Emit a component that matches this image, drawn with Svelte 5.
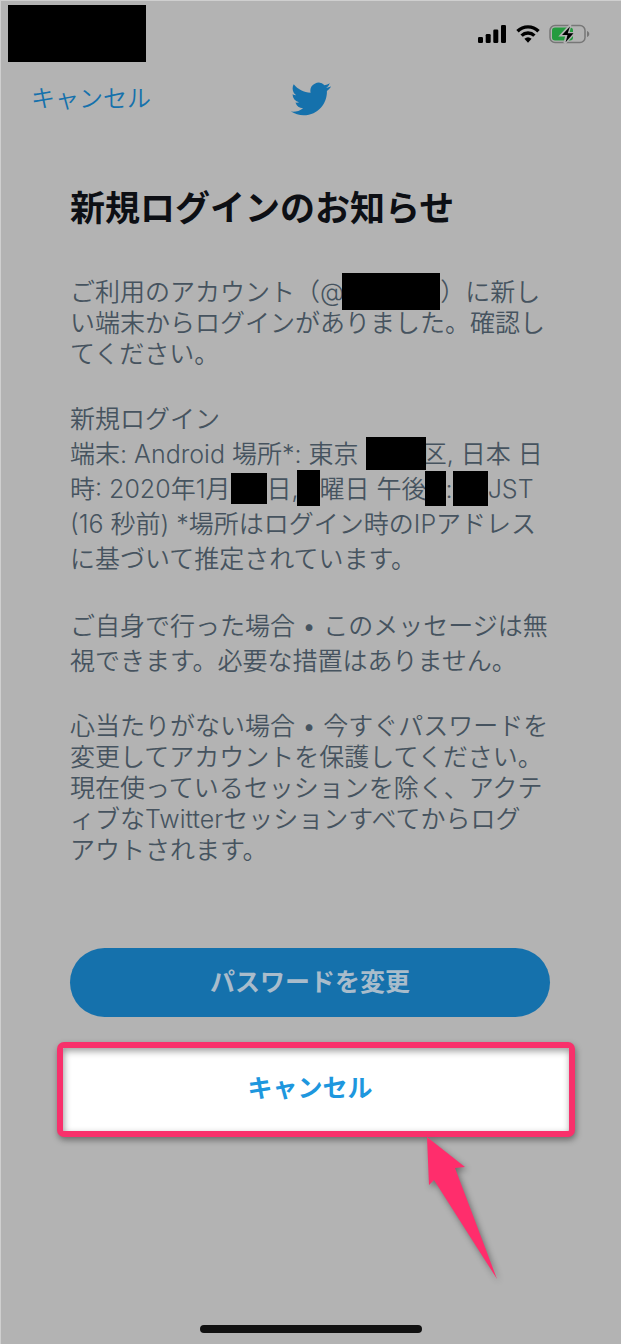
<script lang="ts">
	type Part = string | { w: number; h: number; clip?: 'before' | 'after' };

	const paragraphs: { id: string; tight: boolean; lines: Part[][] }[] = [
		{
			id: 'intro',
			tight: true,
			lines: [
				['ご利用のアカウント（@', { w: 98, h: 37, clip: 'before' }, '）に新し'],
				['い端末からログインがありました。確認し'],
				['てください。']
			]
		},
		{
			id: 'details',
			tight: false,
			lines: [
				['新規ログイン'],
				['端末: Android 場所*: 東京 ', { w: 60, h: 33, clip: 'after' }, '区, 日本 日'],
				[
					'時: 2020年1月',
					{ w: 36, h: 31 },
					'日,',
					{ w: 23, h: 36, clip: 'before' },
					'曜日 午後',
					{ w: 21, h: 35, clip: 'before' },
					':',
					{ w: 35, h: 35 },
					'JST'
				],
				['(16 秒前) *場所はログイン時のIPアドレス'],
				['に基づいて推定されています。']
			]
		},
		{
			id: 'own',
			tight: false,
			lines: [
				['ご自身で行った場合 • このメッセージは無'],
				['視できます。必要な措置はありません。']
			]
		},
		{
			id: 'unknown',
			tight: true,
			lines: [
				['心当たりがない場合 • 今すぐパスワードを'],
				['変更してアカウントを保護してください。'],
				['現在使っているセッションを除く、アクテ'],
				['ィブなTwitterセッションすべてからログ'],
				['アウトされます。']
			]
		}
	];
</script>

<main class="screen">
	<div class="status">
		<span class="mask"></span>
		<div class="status-icons">
			<svg width="29" height="20" viewBox="0 0 29 20">
				<rect x="0" y="13" width="5" height="6" rx="1.3" />
				<rect x="7.7" y="10" width="5" height="9" rx="1.3" />
				<rect x="15.3" y="5.5" width="5" height="13.5" rx="1.3" />
				<rect x="23" y="1" width="5" height="18" rx="1.3" />
			</svg>
			<svg width="24" height="20" viewBox="0 0 24 20">
				<g fill="none" stroke="#000" stroke-width="3.4">
					<path d="M1.5 7.2a15 15 0 0 1 21 0" />
					<path d="M5.6 11.6a9.2 9.2 0 0 1 12.8 0" />
				</g>
				<path d="M8.4 14.8a5.4 5.4 0 0 1 7.2 0L12 18.8z" />
			</svg>
			<svg width="42" height="20" viewBox="0 0 42 20">
				<rect x="1" y="1.5" width="35" height="17" rx="5" fill="none" stroke="#777" stroke-width="1.5" />
				<path d="M38 7c3 .8 3 5.2 0 6z" fill="#777" />
				<rect x="3" y="3.5" width="21" height="13" rx="3" fill="#239b3e" />
				<path d="M21 1.5 12 11.3h5.6l-2 8L25 9.2h-5.8z" stroke="#b3b3b3" stroke-width="2.4" />
				<path d="M21 2.5 13 11h5.6l-2 7.2L24.5 9.2h-5.8z" />
			</svg>
		</div>
	</div>

	<header class="topbar">
		<button class="back">キャンセル</button>
		<svg class="logo" width="40" height="34" viewBox="0 2 24 20" role="img" aria-label="Twitter">
			<path
				d="M23.953 4.57a10 10 0 0 1-2.825.775 4.958 4.958 0 0 0 2.163-2.723 9.99 9.99 0 0 1-3.127 1.184 4.92 4.92 0 0 0-8.384 4.482C7.69 8.095 4.067 6.13 1.64 3.162a4.822 4.822 0 0 0-.666 2.475c0 1.71.87 3.213 2.188 4.096a4.904 4.904 0 0 1-2.228-.616v.06a4.923 4.923 0 0 0 3.946 4.827 4.996 4.996 0 0 1-2.212.085 4.936 4.936 0 0 0 4.604 3.417 9.867 9.867 0 0 1-6.102 2.105c-.39 0-.779-.023-1.17-.067a13.995 13.995 0 0 0 7.557 2.209c9.053 0 13.998-7.496 13.998-13.985 0-.21 0-.42-.015-.63a9.935 9.935 0 0 0 2.46-2.548z"
			/>
		</svg>
	</header>

	<section class="content">
		<h1>新規ログインのお知らせ</h1>

		{#each paragraphs as p (p.id)}
			<p class:tight={p.tight}>
				{#each p.lines as line}
					<span class="line"
						>{#each line as part}{#if typeof part === 'string'}{part}{:else}<span
									class="redacted"
									class:clip-before={part.clip === 'before'}
									class:clip-after={part.clip === 'after'}
									style="width: {part.w}px; height: {part.h}px"
								></span>{/if}{/each}</span
					>
				{/each}
			</p>
		{/each}

		<button class="primary">パスワードを変更</button>

		<div class="highlight">
			<button class="secondary">キャンセル</button>
			<svg class="arrow" width="90" height="160" viewBox="0 0 90 160">
				<path d="M7 5 45 35 35 36 77 147 14 48 9 53z" />
			</svg>
		</div>
	</section>

	<div class="home"></div>
</main>

<style>
	:global(body) {
		margin: 0;
		background: #b3b3b3;
	}

	.screen {
		box-sizing: border-box;
		display: flex;
		flex-direction: column;
		min-height: 100vh;
		border-top: 1px solid #cfcfcf;
		border-left: 1px solid #cfcfcf;
		background: #b3b3b3;
		color: #46535f;
		font-family: Inter, 'Noto Sans CJK JP', sans-serif;
		overflow: hidden;
	}

	button {
		padding: 0;
		border: none;
		background: none;
		font-family: inherit;
		cursor: pointer;
	}

	.status {
		display: flex;
		justify-content: space-between;
		padding: 4px 30px 0 7px;
	}

	.mask {
		width: 138px;
		height: 57px;
		background: #000;
	}

	.status-icons {
		display: flex;
		gap: 9px;
		padding-top: 19px;
	}

	.topbar {
		display: grid;
		grid-template-columns: 1fr auto 1fr;
		align-items: center;
		height: 74px;
		padding: 0 30px;
	}

	.back {
		justify-self: start;
		color: #1571ac;
		font-size: 24px;
		line-height: 36px;
		font-weight: 350;
	}

	.logo {
		fill: #1571ac;
	}

	.content {
		display: flex;
		flex-direction: column;
		padding: 0 71px 0 69px;
	}

	h1 {
		margin: 46px 0 43px;
		color: #0d0f14;
		font-size: 35px;
		line-height: 52px;
		font-weight: 700;
		white-space: nowrap;
	}

	p {
		margin: 0 0 32px;
		font-size: 25px;
		line-height: 35px;
		font-weight: 350;
		white-space: nowrap;
	}

	.tight {
		line-height: 31px;
	}

	.line {
		display: block;
	}

	.redacted {
		display: inline-block;
		position: relative;
		margin: -11px 0 -5px;
		background: #000;
		vertical-align: middle;
	}

	/* the bar eats into the neighbouring glyph */
	.clip-before {
		margin-left: -2px;
	}

	.clip-after {
		margin-right: -4px;
	}

	.primary {
		height: 69px;
		margin-top: 50px;
		padding-bottom: 6px;
		border-radius: 35px;
		background: #1571ac;
		color: #a9bccb;
		font-size: 25px;
		font-weight: 600;
	}

	.highlight {
		position: relative;
		display: flex;
		margin: 25px -25px 0 -13px;
		border: 6px solid #f8306b;
		border-radius: 7px;
		background: #fff;
		box-shadow:
			1px 3px 6px rgba(0, 0, 0, 0.4),
			inset 1px 3px 7px rgba(0, 0, 0, 0.4);
	}

	.secondary {
		flex: 1;
		height: 83px;
		padding: 0 12px 8px 0;
		color: #1e97de;
		font-size: 25px;
		font-weight: 600;
	}

	.arrow {
		position: absolute;
		top: 84px;
		right: 59px;
		fill: #ff2d6c;
		filter: drop-shadow(2px 3px 3px rgba(0, 0, 0, 0.4));
	}

	.home {
		width: 222px;
		height: 8px;
		margin: auto auto 11px;
		border-radius: 4px;
		background: #111;
	}
</style>
